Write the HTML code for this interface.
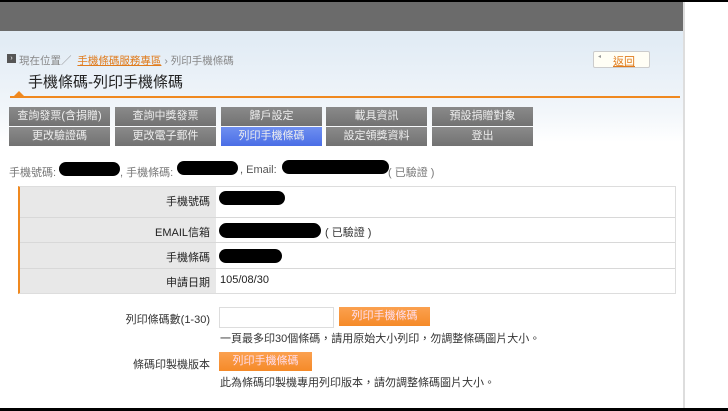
<!DOCTYPE html>
<html><head><meta charset="utf-8"><style>
*{margin:0;padding:0;box-sizing:border-box}
body{width:728px;height:411px;overflow:hidden;background:#000;position:relative;font-family:"Liberation Sans","Noto Sans CJK TC",sans-serif;color:#333;font-size:11px}
.a{position:absolute}
#page{left:0;top:2px;width:683px;height:406px;background:linear-gradient(#e2ecf5 0,#e2ecf5 40px,#f2f6fa 110px,#fff 140px,#fff)}
#right{left:683px;top:2px;width:45px;height:406px;background:#fff;border-left:2px solid #ddd}
#hdr{left:0;top:2px;width:683px;height:29px;background:#6b6b6b}
.btn{position:absolute;height:19px;width:101px;background:linear-gradient(#8a8a8a,#727272);color:#eee;text-align:center;font-size:11px;line-height:19px}
.btn.sel{background:linear-gradient(#6f8ff0,#4a6ee6)}
.lab{position:absolute;left:20px;width:190px;text-align:right;font-size:11px;color:#222}
.blk{position:absolute;background:#000;border-radius:8px;height:14px}
.ob{position:absolute;background:linear-gradient(#fba150,#f58a28);color:#fde;text-align:center;font-size:11px;line-height:19px;height:19px}
</style></head><body>
<div class="a" id="page"></div>
<div class="a" id="right"></div>
<div class="a" id="hdr"></div>
<div class="a" style="left:7px;top:54px;width:9px;height:9px;background:#555;color:#fff;font-size:7px;line-height:9px;text-align:center">›</div>
<div class="a" style="left:19px;top:53px;font-size:10.5px;color:#888">現在位置／ <span style="color:#e07b1c;text-decoration:underline;margin-left:3px">手機條碼服務專區</span> › 列印手機條碼</div>
<div class="a" style="left:28px;top:71px;font-size:15px;color:#222">手機條碼-列印手機條碼</div>
<div class="a" style="left:10px;top:96px;width:670px;height:2px;background:#f0891f"></div>
<div class="a" style="left:14px;top:91px;width:0;height:0;border-left:5px solid transparent;border-right:5px solid transparent;border-bottom:5px solid #f0891f"></div>
<div class="a" style="left:593px;top:51px;width:57px;height:17px;background:#fffef5;border:1px solid #ccc;border-radius:2px"><span style="position:absolute;left:4px;top:1px;font-size:6px;color:#999">◂</span><span style="position:absolute;left:19px;top:1px;color:#e07b1c;text-decoration:underline;font-size:11px">返回</span></div>
<div class="btn" style="left:9px;top:107px">查詢發票(含捐贈)</div>
<div class="btn" style="left:115px;top:107px">查詢中獎發票</div>
<div class="btn" style="left:221px;top:107px">歸戶設定</div>
<div class="btn" style="left:326px;top:107px">載具資訊</div>
<div class="btn" style="left:432px;top:107px">預設捐贈對象</div>
<div class="btn" style="left:9px;top:127px">更改驗證碼</div>
<div class="btn" style="left:115px;top:127px">更改電子郵件</div>
<div class="btn sel" style="left:221px;top:127px">列印手機條碼</div>
<div class="btn" style="left:326px;top:127px">設定領獎資料</div>
<div class="btn" style="left:432px;top:127px">登出</div>
<div class="a" style="left:9px;top:164px;color:#777">手機號碼:</div>
<div class="a" style="left:120px;top:164px;color:#777">, 手機條碼:</div>
<div class="a" style="left:240px;top:164px;color:#555">, Email:</div>
<div class="a" style="left:388px;top:164px;color:#777">( 已驗證 )</div>
<div class="blk" style="left:59px;top:162px;width:61px"></div>
<div class="blk" style="left:177px;top:161px;width:61px"></div>
<div class="blk" style="left:282px;top:160px;width:107px"></div>
<div class="a" style="left:18px;top:186px;width:658px;height:108px;border:1px solid #ddd;border-left:2px solid #f0891f;background:#fff"></div>
<div class="a" style="left:20px;top:187px;width:196px;height:106px;background:#e8e8e8"></div>
<div class="a" style="left:20px;top:217px;width:655px;height:1px;background:#d8d8d8"></div>
<div class="a" style="left:20px;top:242px;width:655px;height:1px;background:#d8d8d8"></div>
<div class="a" style="left:20px;top:268px;width:655px;height:1px;background:#d8d8d8"></div>
<div class="lab" style="top:193px">手機號碼</div>
<div class="lab" style="top:224px">EMAIL信箱</div>
<div class="lab" style="top:249px">手機條碼</div>
<div class="lab" style="top:274px">申請日期</div>
<div class="blk" style="left:219px;top:191px;width:66px"></div>
<div class="blk" style="left:219px;top:223px;width:102px;height:15px"></div>
<div class="a" style="left:325px;top:224px;color:#333">( 已驗證 )</div>
<div class="blk" style="left:219px;top:249px;width:63px"></div>
<div class="a" style="left:220px;top:274px;color:#222">105/08/30</div>
<div class="a" style="left:100px;top:311px;width:110px;text-align:right;color:#333">列印條碼數(1-30)</div>
<div class="a" style="left:219px;top:307px;width:115px;height:21px;background:#fff;border:1px solid #ddd"></div>
<div class="ob" style="left:339px;top:307px;width:91px">列印手機條碼</div>
<div class="a" style="left:220px;top:330px;color:#333">一頁最多印30個條碼，請用原始大小列印，勿調整條碼圖片大小。</div>
<div class="a" style="left:100px;top:356px;width:110px;text-align:right;color:#333">條碼印製機版本</div>
<div class="ob" style="left:219px;top:352px;width:93px">列印手機條碼</div>
<div class="a" style="left:220px;top:374px;color:#333">此為條碼印製機專用列印版本，請勿調整條碼圖片大小。</div>
</body></html>
